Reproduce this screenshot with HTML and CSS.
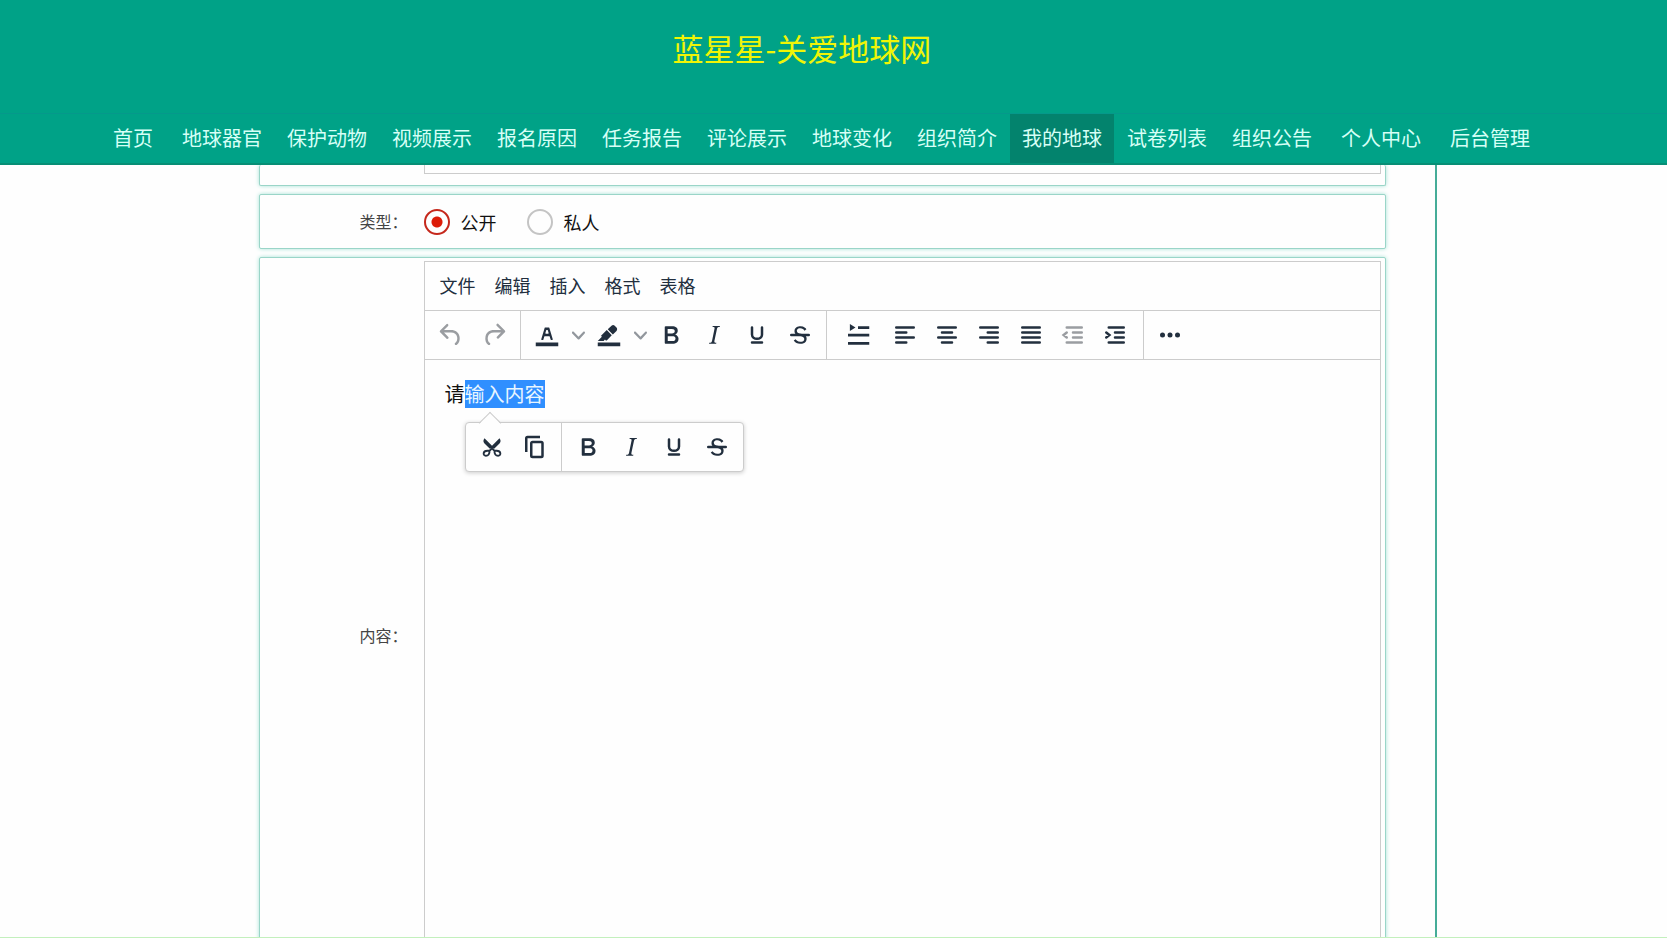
FILE: index.html
```html
<!DOCTYPE html>
<html lang="zh-CN">
<head>
<meta charset="utf-8">
<title>蓝星星-关爱地球网</title>
<link rel="stylesheet" href="styles.css">
</head>
<body>
<svg class="sprite" aria-hidden="true">
  <symbol id="undo" viewBox="0 0 24 24"><path d="M6.400 8H12c3.700 0 6.200 2 6.800 5.100.6 2.700-.4 5.600-2.300 6.800a1 1 0 01-1-1.800c1.100-.6 1.800-2.700 1.400-4.600-.5-2.100-2.100-3.500-4.900-3.500H6.400l3.300 3.300a1 1 0 11-1.400 1.400l-5-5a1 1 0 010-1.400l5-5a1 1 0 011.400 1.400L6.400 8z"/></symbol>
  <symbol id="redo" viewBox="0 0 24 24"><path d="M17.600 10H12c-2.800 0-4.400 1.400-4.900 3.500-.4 2 .3 4 1.400 4.600a1 1 0 11-1 1.800c-2-1.200-2.900-4.100-2.300-6.800.6-3 3-5.100 6.800-5.100h5.600l-3.300-3.300a1 1 0 111.400-1.400l5 5a1 1 0 010 1.400l-5 5a1 1 0 01-1.400-1.400l3.300-3.300z"/></symbol>
  <symbol id="color" viewBox="0 0 24 24"><path d="M3 18h18v3H3z"/><path d="M8.700 16h-.8a.5.5 0 01-.5-.6l2.700-9c.1-.3.3-.4.5-.4h2.800c.2 0 .4.1.5.4l2.700 9a.5.5 0 01-.5.6h-.8a.5.5 0 01-.4-.4l-.7-2.200c0-.3-.3-.4-.5-.4h-3.400c-.2 0-.4.1-.5.4l-.7 2.200c0 .3-.2.4-.4.4zm2.600-7.600l-.6 2a.5.5 0 00.5.6h1.600a.5.5 0 00.5-.6l-.6-2c0-.3-.3-.4-.5-.4h-.4c-.2 0-.4.1-.5.4z"/></symbol>
  <symbol id="marker" viewBox="0 0 24 24"><path d="M3 18h18v3H3z"/><path d="M7.700 16.700H3l3.300-3.300-.7-.8L10.200 8l4 4.100-4 4.200c-.2.200-.6.200-.8 0l-.6-.7-1.100 1.100zM12.700 9.200L11 7.400l3-2.900a2 2 0 012.600 0L18 6c.7.700.7 2 0 2.700l-2.900 2.900-1.800-1.800-.6-.6z"/></symbol>
  <symbol id="chevron" viewBox="0 0 10 10"><path d="M8.700 2.200c.3-.3.8-.3 1 0 .4.400.4.900 0 1.200L5.700 7.800c-.3.300-.9.300-1.200 0L.2 3.400a.8.800 0 010-1.200c.3-.3.8-.3 1.100 0L5 6l3.700-3.800z"/></symbol>
  <symbol id="bold" viewBox="0 0 24 24"><path d="M7.800 19c-.3 0-.5 0-.6-.2l-.2-.5V5.700c0-.2 0-.4.200-.5l.6-.2h5c1.500 0 2.700.3 3.500 1 .7.600 1.100 1.400 1.100 2.500a3 3 0 01-.6 1.900c-.4.600-1 1-1.600 1.200.4.100.9.300 1.300.6s.8.700 1 1.200c.4.400.5 1 .5 1.600 0 1.300-.4 2.300-1.300 3-.8.700-2.100 1-3.800 1H7.800zm5-8.300c.6 0 1.200-.1 1.600-.5.4-.3.6-.7.6-1.300 0-1.100-.8-1.700-2.300-1.700H9.300v3.500h3.400zm.5 6c.7 0 1.300-.1 1.700-.4.4-.4.6-.9.6-1.500s-.2-1-.7-1.400c-.4-.3-1-.4-2-.4H9.400v3.800h4z"/></symbol>
  <symbol id="italic" viewBox="0 0 24 24"><path d="M16.700 4.700l-.1.900h-.3c-.6 0-1 0-1.400.3-.3.300-.4.600-.5 1.100l-2.100 9.800v.6c0 .5.400.8 1.400.8h.2l-.2.800H8l.2-.8h.2c1.100 0 1.800-.5 2-1.500l2-9.800.1-.5c0-.6-.4-.8-1.400-.8h-.3l.2-.9h5.700z"/></symbol>
  <symbol id="underline" viewBox="0 0 24 24"><path d="M8 6v5.500c0 4.700 8 4.700 8 0V6M8 18h8" fill="none" stroke="currentColor" stroke-width="2" stroke-linecap="round"/></symbol>
  <symbol id="strike" viewBox="0 0 24 24"><path d="M15.600 8.500c-.5-.7-1-1.100-1.300-1.300-.6-.4-1.300-.6-2-.6-2.700 0-2.800 1.700-2.800 2.100 0 1.600 1.800 2 3.200 2.300 4.400.9 4.600 2.800 4.600 3.900 0 1.400-.7 4.100-5 4.100A6.200 6.200 0 017 16.400l1.500-1.100c.4.600 1.600 2 3.700 2 1.600 0 2.500-.4 3-1.200.4-.8.300-2-.8-2.600-.7-.4-1.600-.7-2.900-1-1-.2-3.900-.8-3.900-3.600C7.600 6 10.300 5 12.400 5c2.900 0 4.200 1.600 4.700 2.400l-1.500 1.100z"/><path d="M5 11h14a1 1 0 010 2H5a1 1 0 010-2z"/></symbol>
  <symbol id="firstline" viewBox="0 0 24 24"><path d="M5.500 3.200v5.600L10 6zM12 5h9v2.200h-9zM4 11h17v2.200H4zM4 17.500h17v2.200H4z"/></symbol>
  <symbol id="left" viewBox="0 0 24 24"><path class="line" d="M5 6h14M5 10h8M5 14h14M5 18h8"/></symbol>
  <symbol id="center" viewBox="0 0 24 24"><path class="line" d="M5 6h14M8 10h8M5 14h14M8 18h8"/></symbol>
  <symbol id="right" viewBox="0 0 24 24"><path class="line" d="M5 6h14M11 10h8M5 14h14M11 18h8"/></symbol>
  <symbol id="justify" viewBox="0 0 24 24"><path class="line" d="M5 6h14M5 10h14M5 14h14M5 18h14"/></symbol>
  <symbol id="outdent" viewBox="0 0 24 24"><path class="line" d="M7 6h12M12 10h7M12 14h7M7 18h12M7 10l-2.500 2L7 14"/></symbol>
  <symbol id="indent" viewBox="0 0 24 24"><path class="line" d="M7 6h12M12 10h7M12 14h7M7 18h12M5 10l2.500 2L5 14"/></symbol>
  <symbol id="more" viewBox="0 0 24 24"><circle cx="6" cy="12" r="2"/><circle cx="12" cy="12" r="2"/><circle cx="18" cy="12" r="2"/></symbol>
  <symbol id="cut" viewBox="0 0 24 24"><path d="M6 4.900l6 6 6-6c1.200 1.500 1.100 3 0 4.200l-4.500 4.400-1.500-1.300-1.500 1.300L6 9.100C4.900 7.900 4.800 6.400 6 4.900z"/><path d="M13 12l-3 3c.2 2.600-1 4-2.900 4-2.600 0-2.500-4 1.200-4H10M11 12l3 3c-.2 2.600 1 4 2.900 4 2.600 0 2.500-4-1.200-4H14" fill="none" stroke="currentColor" stroke-width="1.500"/></symbol>
  <symbol id="copy" viewBox="0 0 24 24"><path d="M16 3H6a2 2 0 00-2 2v11h2V5h10V3zm1 4a2 2 0 012 2v10a2 2 0 01-2 2h-7a2 2 0 01-2-2V9c0-1.200.9-2 2-2h7zm0 12V9h-7v10h7z"/></symbol>
</svg>

<header class="header">
  <h1 class="title">蓝星星-关爱地球网</h1>
  <nav class="nav">
    <a class="nav-link" href="#">首页</a>
    <div class="nav-group">
      <a class="nav-link" href="#">地球器官</a>
      <a class="nav-link" href="#">保护动物</a>
      <a class="nav-link" href="#">视频展示</a>
      <a class="nav-link" href="#">报名原因</a>
      <a class="nav-link" href="#">任务报告</a>
      <a class="nav-link" href="#">评论展示</a>
      <a class="nav-link" href="#">地球变化</a>
      <a class="nav-link" href="#">组织简介</a>
      <a class="nav-link active" href="#">我的地球</a>
      <a class="nav-link" href="#">试卷列表</a>
      <a class="nav-link" href="#">组织公告</a>
    </div>
    <a class="nav-link" href="#">个人中心</a>
    <a class="nav-link" href="#">后台管理</a>
  </nav>
</header>

<div class="page">
  <main class="content">
    <section class="row row-previous"><div class="field field-previous"></div></section>

    <section class="row row-type" role="radiogroup" aria-labelledby="type-label">
      <span class="label" id="type-label">类型：</span>
      <div class="options">
        <label class="option"><input class="radio" type="radio" name="type" checked>公开</label>
        <label class="option"><input class="radio" type="radio" name="type">私人</label>
      </div>
    </section>

    <section class="row row-content">
      <span class="label" id="content-label">内容：</span>
      <div class="editor">
        <div class="menubar">
          <button class="menu">文件</button>
          <button class="menu">编辑</button>
          <button class="menu">插入</button>
          <button class="menu">格式</button>
          <button class="menu">表格</button>
        </div>
        <div class="toolbar">
          <div class="group">
            <button class="tool" aria-label="撤销" disabled><svg class="icon"><use href="#undo"/></svg></button>
            <button class="tool" aria-label="重做" disabled><svg class="icon"><use href="#redo"/></svg></button>
          </div>
          <div class="group">
            <button class="tool" aria-label="文字颜色"><svg class="icon"><use href="#color"/></svg></button>
            <button class="drop" aria-label="选择文字颜色"><svg class="icon-small"><use href="#chevron"/></svg></button>
            <button class="tool" aria-label="背景颜色"><svg class="icon"><use href="#marker"/></svg></button>
            <button class="drop" aria-label="选择背景颜色"><svg class="icon-small"><use href="#chevron"/></svg></button>
            <button class="tool" aria-label="粗体"><svg class="icon"><use href="#bold"/></svg></button>
            <button class="tool" aria-label="斜体"><svg class="icon"><use href="#italic"/></svg></button>
            <button class="tool" aria-label="下划线"><svg class="icon"><use href="#underline"/></svg></button>
            <button class="tool" aria-label="删除线"><svg class="icon"><use href="#strike"/></svg></button>
          </div>
          <div class="group group-align">
            <button class="tool tool-wide" aria-label="首行缩进"><svg class="icon"><use href="#firstline"/></svg></button>
            <button class="tool" aria-label="左对齐"><svg class="icon"><use href="#left"/></svg></button>
            <button class="tool" aria-label="居中"><svg class="icon"><use href="#center"/></svg></button>
            <button class="tool" aria-label="右对齐"><svg class="icon"><use href="#right"/></svg></button>
            <button class="tool" aria-label="两端对齐"><svg class="icon"><use href="#justify"/></svg></button>
            <button class="tool" aria-label="减少缩进" disabled><svg class="icon"><use href="#outdent"/></svg></button>
            <button class="tool" aria-label="增加缩进"><svg class="icon"><use href="#indent"/></svg></button>
          </div>
          <div class="group">
            <button class="tool" aria-label="更多"><svg class="icon"><use href="#more"/></svg></button>
          </div>
        </div>
        <div class="canvas">
          <div class="text" contenteditable="true" role="textbox" aria-multiline="true" aria-labelledby="content-label">请<mark class="selected">输入内容</mark></div>
          <div class="popup">
            <div class="group">
              <button class="tool" aria-label="剪切"><svg class="icon"><use href="#cut"/></svg></button>
              <button class="tool" aria-label="复制"><svg class="icon"><use href="#copy"/></svg></button>
            </div>
            <div class="group">
              <button class="tool" aria-label="粗体"><svg class="icon"><use href="#bold"/></svg></button>
              <button class="tool" aria-label="斜体"><svg class="icon"><use href="#italic"/></svg></button>
              <button class="tool" aria-label="下划线"><svg class="icon"><use href="#underline"/></svg></button>
              <button class="tool" aria-label="删除线"><svg class="icon"><use href="#strike"/></svg></button>
            </div>
          </div>
        </div>
      </div>
    </section>
  </main>
</div>
</body>
</html>
```
FILE: styles.css
```css
* {
  box-sizing: border-box;
}

body {
  margin: 0;
  height: 100vh;
  display: flex;
  flex-direction: column;
  overflow: hidden;
  background: #fefefe;
  border-bottom: 1px solid #c3f0bd;
  font-family: "Noto Sans CJK SC", sans-serif;
  font-size: 16px;
  color: #222f3e;
}

button {
  border: 0;
  padding: 0;
  background: none;
  font: inherit;
  color: inherit;
}

.sprite {
  position: absolute;
  width: 0;
  height: 0;
}

.header {
  flex: none;
  background: #00a287;
  border-bottom: 2px solid #078e75;
}

.title {
  margin: 0;
  padding: 25px 63px 0 0;
  height: 113px;
  font-size: 31px;
  line-height: 46px;
  font-weight: 400;
  text-align: center;
  color: #f0f506;
}

.nav {
  display: flex;
  justify-content: center;
  gap: 5px;
  padding-right: 24px;
  border-top: 1px solid #05998b;
}

.nav-group {
  display: flex;
  gap: 1px;
}

.nav-link {
  padding: 0 12px 2px;
  font-size: 20px;
  line-height: 47px;
  white-space: nowrap;
  text-decoration: none;
  color: #d6fff6;
}

.nav-link.active {
  background: #03836d;
}

.page {
  flex: 1;
  min-height: 0;
  overflow: hidden;
  padding-right: 24px;
}

.content {
  max-width: 1230px;
  margin: 0 auto;
  padding: 0 49px 0 52px;
  display: flex;
  flex-direction: column;
  gap: 8px;
  border-right: 2px solid #45ac98;
}

.row {
  display: flex;
  align-items: center;
  padding: 3px 4px 3px 0;
  background: #fefefe;
  border: 1px solid #9ad5c8;
  border-radius: 2px;
  box-shadow: 0 0 4px #a5e3d6;
}

.row-previous {
  border-top: 0;
  padding: 0 4px 11px 0;
}

.field-previous {
  flex: 1;
  height: 9px;
  margin-left: 164px;
  border: 1px solid #cccccc;
  border-top: 0;
}

.row-type {
  height: 55px;
}

.label {
  flex: none;
  width: 164px;
  padding: 0 16px 2px 0;
  text-align: right;
  color: #444444;
}

.options {
  display: flex;
  gap: 30px;
}

.option {
  display: flex;
  align-items: center;
  gap: 11px;
  font-size: 18px;
  color: #111111;
}

.radio {
  appearance: none;
  width: 26px;
  height: 26px;
  margin: 0;
  border: 2px solid #c4c4c4;
  border-radius: 50%;
}

.radio:checked {
  border-color: #c5281c;
  background: radial-gradient(circle, #dc1c08 5px, transparent 6px);
}

.editor {
  flex: 1;
  min-width: 0;
  height: 750px;
  display: flex;
  flex-direction: column;
  border: 1px solid #cccccc;
}

.menubar {
  display: flex;
  gap: 19px;
  padding: 0 15px;
}

.menu {
  height: 48px;
  padding-bottom: 2px;
  font-size: 18px;
}

.toolbar {
  display: flex;
  height: 50px;
  border-top: 1px solid #cccccc;
  border-bottom: 1px solid #cccccc;
}

.group {
  display: flex;
  align-items: center;
  padding: 0 4px 0 5px;
  border-right: 1px solid #cccccc;
}

.group-align {
  padding-right: 7px;
}

.group:last-child {
  border-right: 0;
}

.tool {
  display: flex;
  align-items: center;
  justify-content: center;
  width: 43px;
  height: 42px;
}

.group-align .tool {
  width: 42px;
}

.group-align .tool-wide {
  width: 52px;
}

.tool:disabled {
  color: #9a9da1;
}

.drop {
  display: flex;
  align-items: center;
  justify-content: center;
  width: 19px;
  height: 42px;
  color: #92979d;
}

.icon {
  width: 30px;
  height: 30px;
  fill: currentColor;
}

.icon-small {
  width: 13px;
  height: 13px;
  fill: currentColor;
}

.line {
  fill: none;
  stroke: currentColor;
  stroke-width: 2;
  stroke-linecap: round;
}

.canvas {
  flex: 1;
  position: relative;
  padding: 20px;
}

.text {
  font-size: 20px;
  line-height: 28px;
  color: #111111;
  outline: 0;
}

.selected {
  display: inline-block;
  background: #2f8fff;
  color: #e8f6ff;
}

.popup {
  position: absolute;
  left: 40px;
  top: 62px;
  display: flex;
  height: 50px;
  background: #fefefe;
  border: 1px solid #cccccc;
  border-radius: 4px;
  box-shadow: 0 1px 4px #cccccc;
}

.popup::before {
  content: "";
  position: absolute;
  left: 16px;
  top: -8px;
  width: 15px;
  height: 15px;
  background: linear-gradient(135deg, #fefefe 50%, transparent 50%);
  border-top: 1px solid #cccccc;
  border-left: 1px solid #cccccc;
  transform: rotate(45deg);
}
```
